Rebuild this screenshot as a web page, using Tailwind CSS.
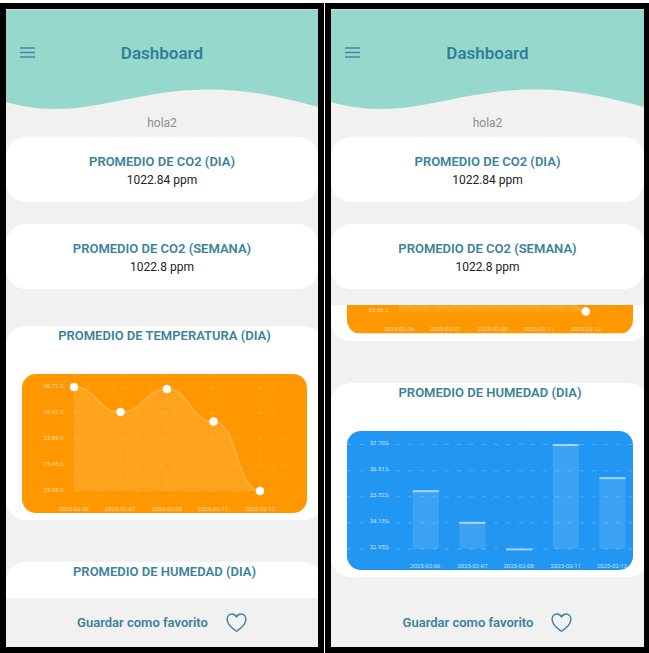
<!DOCTYPE html>
<html lang="es">
<head>
<meta charset="utf-8">
<meta name="viewport" content="width=device-width, initial-scale=1">
<title>Dashboard</title>
<script src="https://cdn.jsdelivr.net/npm/@tailwindcss/browser@4"></script>
</head>
<body class="bg-white">
<!-- Shared chart drawings -->
<svg class="hidden" aria-hidden="true">
  <symbol id="temperature" viewBox="0 0 285 139">
    <rect width="285" height="139" fill="#ff9800"/>
    <path d="M52 13H285M52 39H285M52 65H285M52 91H285M52 117H285" stroke="#fff" stroke-opacity=".18" stroke-dasharray="4 8.3"/>
    <path d="M52 0V117M98.5 0V117M145 0V117M191.5 0V117M238 0V117" stroke="#fff" stroke-opacity=".16" stroke-dasharray="4 8.3"/>
    <path d="M52 13C75 13 75 38 98.500 38C122 38 122 15 145 15C168 15 168 47.500 191.500 47.500C215 47.500 215 117 238 117H52Z" fill="#fff" fill-opacity=".11"/>
    <path d="M52 13C75 13 75 38 98.500 38C122 38 122 15 145 15C168 15 168 47.500 191.500 47.500C215 47.500 215 117 238 117" fill="none" stroke="#fff" stroke-opacity=".22" stroke-width="1.600"/>
    <g fill="#fff" stroke="#fff" stroke-opacity=".45">
      <circle cx="52" cy="13" r="4"/><circle cx="98.500" cy="38" r="4"/><circle cx="145" cy="15" r="4"/><circle cx="191.500" cy="47.500" r="4"/><circle cx="238" cy="117" r="4"/>
    </g>
    <g font-size="6" fill="#fff" fill-opacity=".65" text-anchor="end">
      <text x="42" y="14">26.72 C</text><text x="42" y="40">26.31 C</text><text x="42" y="66">25.89 C</text><text x="42" y="92">25.48 C</text><text x="42" y="118">25.06 C</text>
    </g>
    <g font-size="6" fill="#fff" fill-opacity=".65" text-anchor="middle">
      <text x="52" y="137">2025-02-06</text><text x="98" y="137">2025-02-07</text><text x="145" y="137">2025-02-08</text><text x="191" y="137">2025-02-11</text><text x="238" y="137">2025-02-12</text>
    </g>
  </symbol>
  <symbol id="humidity" viewBox="0 0 285 139">
    <rect width="285" height="139" fill="#2196f3"/>
    <path d="M0 13.500H285M0 39.500H285M0 65.500H285M0 91.500H285M0 117.500H285" stroke="#fff" stroke-opacity=".26" stroke-dasharray="4 8.200"/>
    <g fill="#fff" fill-opacity=".12">
      <rect x="65.500" y="59" width="26" height="58.500"/><rect x="112" y="90.500" width="26" height="27"/><rect x="205" y="13" width="26" height="104.500"/><rect x="251.500" y="46" width="26" height="71.500"/>
    </g>
    <g fill="#fff" fill-opacity=".55">
      <rect x="65.500" y="59" width="26" height="2"/><rect x="112" y="90.500" width="26" height="2"/><rect x="158.500" y="117" width="26" height="2"/><rect x="205" y="13" width="26" height="2"/><rect x="251.500" y="46" width="26" height="2"/>
    </g>
    <g font-size="6" fill="#fff" fill-opacity=".75" text-anchor="end">
      <text x="42" y="14">37.70%</text><text x="42" y="40">36.51%</text><text x="42" y="66">35.32%</text><text x="42" y="92">34.13%</text><text x="42" y="118">32.95%</text>
    </g>
    <g font-size="6" fill="#fff" fill-opacity=".75" text-anchor="middle">
      <text x="78" y="137">2025-02-06</text><text x="125" y="137">2025-02-07</text><text x="171" y="137">2025-02-08</text><text x="218" y="137">2025-02-11</text><text x="264" y="137">2025-02-12</text>
    </g>
  </symbol>
  <symbol id="wave" viewBox="0 0 312 100" preserveAspectRatio="none">
    <path d="M0 0H312V98C268 86 238 80.500 203 80.500C140 80.500 98 100 49 100C30 100 14 97 0 93Z" fill="#96d8cb"/>
    <path d="M0 .5H312" stroke="#c4e5de"/>
  </symbol>
  <symbol id="menu" viewBox="0 0 15 11">
    <path d="M0 1H15M0 5.500H15M0 10H15" stroke="#3c8aa2" stroke-width="1.400"/>
  </symbol>
  <symbol id="heart" viewBox="0 0 22 20">
    <path d="M11 4.200C9.900 2.200 8.400 1.100 6.300 1.100C3.300 1.100 1.100 3.500 1.100 6.700C1.100 11.800 6 16 10.300 18.900Q11 19.300 11.700 18.900C16 16 20.900 11.800 20.900 6.700C20.900 3.500 18.700 1.100 15.700 1.100C13.600 1.100 12.100 2.200 11 4.200Z" fill="none" stroke="#3b829b" stroke-width="1.500" stroke-linejoin="round"/>
  </symbol>
</svg>

<div class="grid h-screen grid-cols-2 gap-px pt-[3px] font-['Roboto','Liberation_Sans',sans-serif]">
  <section class="flex min-h-0 min-w-0 bg-black p-[6px]" aria-label="Dashboard, inicio">
    <div class="flex min-w-0 flex-1 flex-col overflow-hidden bg-[#f1f1f1]">
      <header class="relative grid h-[100px] shrink-0 grid-cols-[1fr_auto_1fr] items-start px-[14px] pt-8">
        <svg class="absolute inset-0 h-full w-full" aria-hidden="true"><use href="#wave"/></svg>
        <button type="button" aria-label="Menú" class="relative flex h-[22px] items-center"><svg class="h-[11px] w-[15px]"><use href="#menu"/></svg></button>
        <h1 class="relative text-[17px] leading-6 font-semibold text-[#327f9b]">Dashboard</h1>
      </header>
      <p class="shrink-0 text-center text-[12px] leading-7 text-[#8d8d8d]">hola2</p>
      <div class="flex shrink-0 flex-col gap-[22px] text-center">
        <article class="rounded-[20px] bg-white pt-4 pb-[13px]">
          <h2 class="text-[13px] leading-[18px] font-semibold text-[#3b829b]">PROMEDIO DE CO2 (DIA)</h2>
          <p class="text-[12px] leading-[18px] text-[#222]">1022.84 ppm</p>
        </article>
        <article class="rounded-[20px] bg-white pt-4 pb-[13px]">
          <h2 class="text-[13px] leading-[18px] font-semibold text-[#3b829b]">PROMEDIO DE CO2 (SEMANA)</h2>
          <p class="text-[12px] leading-[18px] text-[#222]">1022.8 ppm</p>
        </article>
      </div>
      <main class="mt-4 flex min-h-0 flex-1 flex-col overflow-hidden">
        <div class="-mr-[5px] flex shrink-0 flex-col gap-[42px] py-[21px]">
          <article class="rounded-[20px] bg-white pb-[7px]">
            <h2 class="text-center text-[13px] leading-5 font-semibold text-[#3b829b]">PROMEDIO DE TEMPERATURA (DIA)</h2>
            <div class="mx-4 mt-7 overflow-hidden rounded-[14px]"><svg class="block aspect-[285/139] w-full" role="img" aria-label="Temperatura por día"><use href="#temperature"/></svg></div>
          </article>
          <article class="rounded-[20px] bg-white pb-[7px]">
            <h2 class="text-center text-[13px] leading-5 font-semibold text-[#3b829b]">PROMEDIO DE HUMEDAD (DIA)</h2>
            <div class="mx-4 mt-7 overflow-hidden rounded-[14px]"><svg class="block aspect-[285/139] w-full" role="img" aria-label="Humedad por día"><use href="#humidity"/></svg></div>
          </article>
        </div>
      </main>
      <footer class="flex h-[49px] shrink-0 items-center justify-center">
        <button type="button" class="flex items-center gap-[18px] text-[13px] leading-5 font-semibold text-[#3b829b]">Guardar como favorito <svg class="h-[19px] w-[21px]" aria-hidden="true"><use href="#heart"/></svg></button>
      </footer>
    </div>
  </section>

  <section class="flex min-h-0 min-w-0 bg-black p-[6px] pr-[5px]" aria-label="Dashboard, final de la lista">
    <div class="flex min-w-0 flex-1 flex-col overflow-hidden bg-[#f1f1f1]">
      <header class="relative grid h-[100px] shrink-0 grid-cols-[1fr_auto_1fr] items-start px-[14px] pt-8">
        <svg class="absolute inset-0 h-full w-full" aria-hidden="true"><use href="#wave"/></svg>
        <button type="button" aria-label="Menú" class="relative flex h-[22px] items-center"><svg class="h-[11px] w-[15px]"><use href="#menu"/></svg></button>
        <h1 class="relative text-[17px] leading-6 font-semibold text-[#327f9b]">Dashboard</h1>
      </header>
      <p class="shrink-0 text-center text-[12px] leading-7 text-[#8d8d8d]">hola2</p>
      <div class="flex shrink-0 flex-col gap-[22px] text-center">
        <article class="rounded-[20px] bg-white pt-4 pb-[13px]">
          <h2 class="text-[13px] leading-[18px] font-semibold text-[#3b829b]">PROMEDIO DE CO2 (DIA)</h2>
          <p class="text-[12px] leading-[18px] text-[#222]">1022.84 ppm</p>
        </article>
        <article class="rounded-[20px] bg-white pt-4 pb-[13px]">
          <h2 class="text-[13px] leading-[18px] font-semibold text-[#3b829b]">PROMEDIO DE CO2 (SEMANA)</h2>
          <p class="text-[12px] leading-[18px] text-[#222]">1022.8 ppm</p>
        </article>
      </div>
      <!-- List scrolled to its end -->
      <main class="mt-4 flex min-h-0 flex-1 flex-col justify-end overflow-hidden">
        <div class="-mr-[5px] flex shrink-0 flex-col gap-[42px] py-[21px]">
          <article class="rounded-[20px] bg-white pt-12 pb-[7px]">
            <div class="mx-4 overflow-hidden rounded-[14px]"><svg class="block aspect-[285/139] w-full" role="img" aria-label="Temperatura por día"><use href="#temperature"/></svg></div>
          </article>
          <article class="rounded-[20px] bg-white pb-[7px]">
            <h2 class="text-center text-[13px] leading-5 font-semibold text-[#3b829b]">PROMEDIO DE HUMEDAD (DIA)</h2>
            <div class="mx-4 mt-7 overflow-hidden rounded-[14px]"><svg class="block aspect-[285/139] w-full" role="img" aria-label="Humedad por día"><use href="#humidity"/></svg></div>
          </article>
        </div>
      </main>
      <footer class="flex h-[49px] shrink-0 items-center justify-center">
        <button type="button" class="flex items-center gap-[18px] text-[13px] leading-5 font-semibold text-[#3b829b]">Guardar como favorito <svg class="h-[19px] w-[21px]" aria-hidden="true"><use href="#heart"/></svg></button>
      </footer>
    </div>
  </section>
</div>
</body>
</html>
